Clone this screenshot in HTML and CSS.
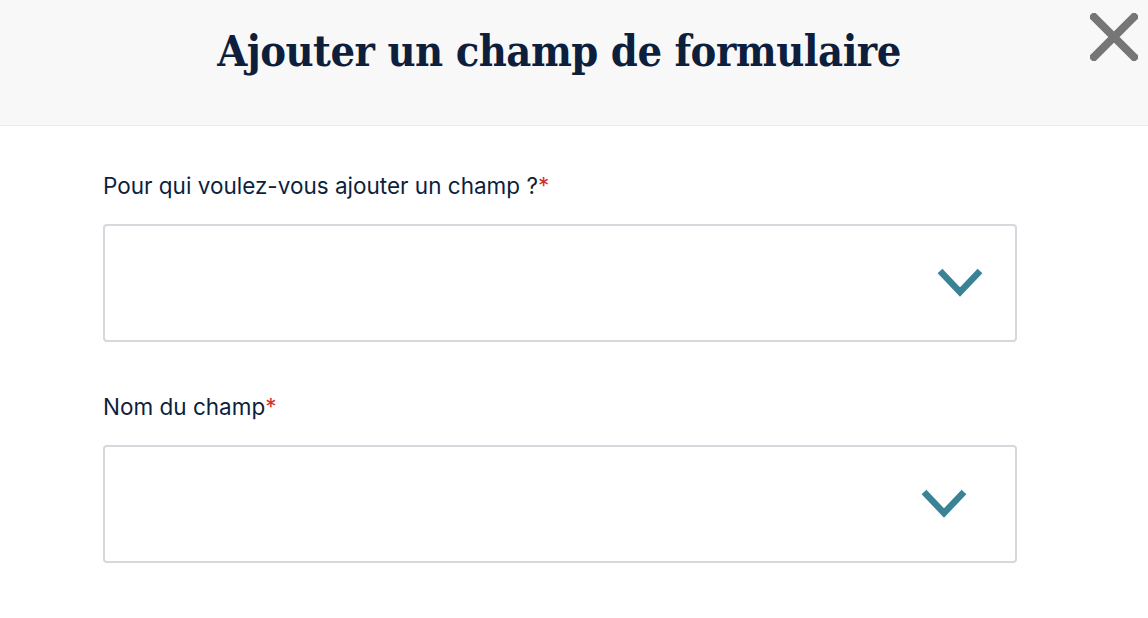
FILE: index.html
```html
<!DOCTYPE html>
<html lang="fr">
<head>
<meta charset="utf-8">
<title>Ajouter un champ de formulaire</title>
<link rel="stylesheet" href="styles.css">
</head>
<body>
<div class="modal">
  <header class="modal-header">
    <h1 class="modal-title">Ajouter un champ de formulaire</h1>
    <button class="close-btn" aria-label="Fermer">
      <svg width="48" height="48" viewBox="0 0 48 48"><path d="M4 4 L44 44 M44 4 L4 44" stroke="#767676" stroke-width="8" stroke-linecap="square" fill="none"/></svg>
    </button>
  </header>
  <div class="modal-body">
    <div class="field">
      <label class="field-label">Pour qui voulez-vous ajouter un champ ?<span class="req">*</span></label>
      <div class="select select-a">
        <svg class="chev" width="46" height="30" viewBox="0 0 46 30"><path d="M3 3 L23 24 L43 3" stroke="#3a8397" stroke-width="6.5" fill="none"/></svg>
      </div>
    </div>
    <div class="field">
      <label class="field-label">Nom du champ<span class="req">*</span></label>
      <div class="select select-b">
        <svg class="chev" width="46" height="30" viewBox="0 0 46 30"><path d="M3 3 L23 24 L43 3" stroke="#3a8397" stroke-width="6.5" fill="none"/></svg>
      </div>
    </div>
  </div>
</div>
</body>
</html>
```
FILE: styles.css
```css
html, body {
  margin: 0;
  padding: 0;
  background: #ffffff;
}
body {
  font-family: "Inter", "Lato", sans-serif;
  color: #0d1f3c;
}
.modal-header {
  position: relative;
  height: 126px;
  box-sizing: border-box;
  padding: 0 30px 24px 0;
  background: #f8f8f8;
  border-bottom: 1px solid #ececec;
  display: flex;
  align-items: center;
  justify-content: center;
}
.modal-title {
  margin: 0;
  font-family: "DejaVu Serif", serif;
  font-stretch: condensed;
  font-weight: bold;
  font-size: 43px;
  line-height: 52px;
  color: #0d1f3c;
  letter-spacing: -0.5px;
}
.close-btn {
  position: absolute;
  top: 13px;
  right: 10px;
  width: 48px;
  height: 48px;
  padding: 0;
  border: 0;
  background: transparent;
  display: block;
}
.close-btn svg { display: block; }
.modal-body {
  padding: 45px 131px 0 103px;
  display: flex;
  flex-direction: column;
  gap: 50px;
}
.field {
  display: flex;
  flex-direction: column;
}
.field-label {
  font-size: 22.5px;
  line-height: 30px;
  color: #0d1f3c;
  margin-bottom: 23px;
}
.req { color: #d0312d; }
.select {
  height: 114px;
  border: 2px solid #d5d8dc;
  border-radius: 4px;
  display: flex;
  align-items: center;
  justify-content: flex-end;
  box-sizing: content-box;
}
.chev { display: block; }
.select-a { padding-right: 32px; }
.select-b { padding-right: 48px; }
```
